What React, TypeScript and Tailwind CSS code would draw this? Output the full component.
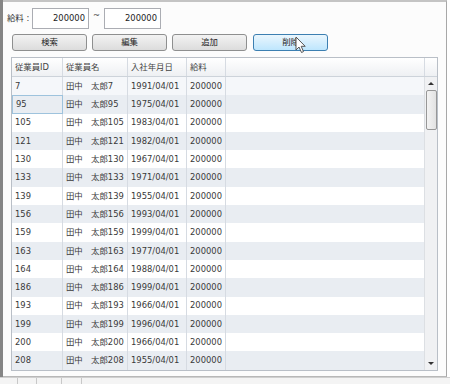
import React from "react"

const rows: [string, string, string][] = [
  ["7", "太郎7", "1991/04/01"],
  ["95", "太郎95", "1975/04/01"],
  ["105", "太郎105", "1983/04/01"],
  ["121", "太郎121", "1982/04/01"],
  ["130", "太郎130", "1967/04/01"],
  ["133", "太郎133", "1971/04/01"],
  ["139", "太郎139", "1955/04/01"],
  ["156", "太郎156", "1993/04/01"],
  ["159", "太郎159", "1999/04/01"],
  ["163", "太郎163", "1977/04/01"],
  ["164", "太郎164", "1988/04/01"],
  ["186", "太郎186", "1999/04/01"],
  ["193", "太郎193", "1966/04/01"],
  ["199", "太郎199", "1996/04/01"],
  ["200", "太郎200", "1966/04/01"],
  ["208", "太郎208", "1955/04/01"],
]

const buttons = ["検索", "編集", "追加", "削除"]

const Cursor = () => (
  <svg className="absolute left-[295px] top-[36px]" width="12" height="18" viewBox="0 0 12 18">
    <path d="M1 1 L1 14 L4 11 L6.5 16.5 L8.5 15.6 L6.2 10.3 L10.2 10.3 Z" fill="#fff" stroke="#555" strokeWidth="1" strokeLinejoin="round" />
  </svg>
)

export default function App() {
  return (
    <div className="w-[450px] h-[384px] bg-white flex flex-col overflow-hidden relative font-['DejaVu_Sans','Noto_Sans_CJK_JP',sans-serif] text-[8.4px] text-[#3a3a3a]">
      <div className="flex h-[377px]">
        <div className="w-[3px] bg-[#858585]" />
        <div className="w-[444px] border-t-2 border-t-[#c4c4c4] border-r border-r-[#a8a8a8] border-b border-b-[#b8b8b8] bg-[#fcfcfc] flex flex-col">
          {/* search row */}
          <div className="flex items-center h-[21px] mt-[6px] pl-[4px]">
            <span className="w-[25px] text-[#333]">給料 :</span>
            <div className="w-[57px] h-[21px] bg-white border border-[#abadb3] flex items-center justify-end pr-[3px] text-[#222]">200000</div>
            <span className="w-[15px] text-center text-[#444] -mt-[6px]">~</span>
            <div className="w-[57px] h-[21px] bg-white border border-[#abadb3] flex items-center justify-end pr-[3px] text-[#222]">200000</div>
          </div>

          {/* buttons */}
          <div className="flex gap-[5px] pl-[9px] mt-[5px]">
            {buttons.map((b, i) => (
              <div
                key={b}
                className={`w-[75px] h-[17px] rounded-[3px] border flex items-center justify-center text-[#222] ${
                  i === 3
                    ? "ml-[1px] border-[#3c7fb1] bg-gradient-to-b from-[#eaf6fd] to-[#bee6fd]"
                    : "border-[#8e8f8f] bg-gradient-to-b from-[#f3f3f3] to-[#dcdcdc]"
                }`}
              >
                {b}
              </div>
            ))}
          </div>

          {/* grid */}
          <div className="ml-[8px] mt-[6px] w-[427px] h-[314px] border border-[#b9bfc7] bg-white flex flex-col">
            <div className="flex h-[19px] border-b border-[#cdd3da] bg-gradient-to-b from-[#ffffff] to-[#eef0f3] text-[#444]">
              <div className="w-[51px] border-r border-[#d6dbe2] pl-[3px] flex items-center">従業員ID</div>
              <div className="w-[65px] border-r border-[#d6dbe2] pl-[3px] flex items-center">従業員名</div>
              <div className="w-[59px] border-r border-[#d6dbe2] pl-[3px] flex items-center">入社年月日</div>
              <div className="w-[39px] border-r border-[#d6dbe2] pl-[3px] flex items-center">給料</div>
              <div className="flex-1 border-r border-[#d6dbe2]" />
              <div className="w-[12px]" />
            </div>
            <div className="flex flex-1 min-h-0">
              <div className="flex-1 flex flex-col">
                {rows.map(([id, name, date], i) => (
                  <div
                    key={id}
                    className={`flex h-[18.3px] ${i === 0 ? "bg-[#f5f7fa]" : i % 2 === 1 ? "bg-[#e9edf2]" : "bg-white"}`}
                  >
                    <div
                      className={`w-[51px] pl-[3px] flex items-center ${
                        i === 1 ? "border border-[#9ec3dd]" : "border-r border-[#d6dbe2]"
                      }`}
                    >
                      {id}
                    </div>
                    <div className="w-[65px] border-r border-[#d6dbe2] pl-[3px] flex items-center whitespace-pre">{"田中　" + name}</div>
                    <div className="w-[59px] border-r border-[#d6dbe2] pl-[3px] flex items-center">{date}</div>
                    <div className="w-[39px] border-r border-[#d6dbe2] pl-[3px] flex items-center">200000</div>
                    <div className="flex-1" />
                  </div>
                ))}
              </div>
              {/* scrollbar */}
              <div className="w-[13px] border-l border-[#dcdfe3] bg-[#f0f1f3] flex flex-col items-center">
                <div className="h-[13px] w-full flex items-center justify-center">
                  <div className="w-0 h-0 border-l-[3px] border-r-[3px] border-b-[3px] border-l-transparent border-r-transparent border-b-[#333]" />
                </div>
                <div className="w-[11px] h-[40px] rounded-[2px] border border-[#979797] bg-gradient-to-r from-[#f3f3f3] to-[#e2e2e2]" />
                <div className="flex-1" />
                <div className="h-[13px] w-full flex items-center justify-center">
                  <div className="w-0 h-0 border-l-[3px] border-r-[3px] border-t-[3px] border-l-transparent border-r-transparent border-t-[#333]" />
                </div>
              </div>
            </div>
          </div>
        </div>
        <div className="flex-1 bg-white" />
      </div>

      {/* bottom strip */}
      <div className="flex h-[7px] bg-[#f4f4f4] border-t border-[#d0d0d0]">
        <div className="w-[18px] border-r border-[#c8c8c8]" />
        <div className="w-[19px] border-r border-[#c8c8c8]" />
        <div className="w-[25px] border-r border-[#c8c8c8]" />
        <div className="w-[20px] border-r border-[#c8c8c8]" />
        <div className="flex-1" />
      </div>

      <Cursor />
    </div>
  )
}
